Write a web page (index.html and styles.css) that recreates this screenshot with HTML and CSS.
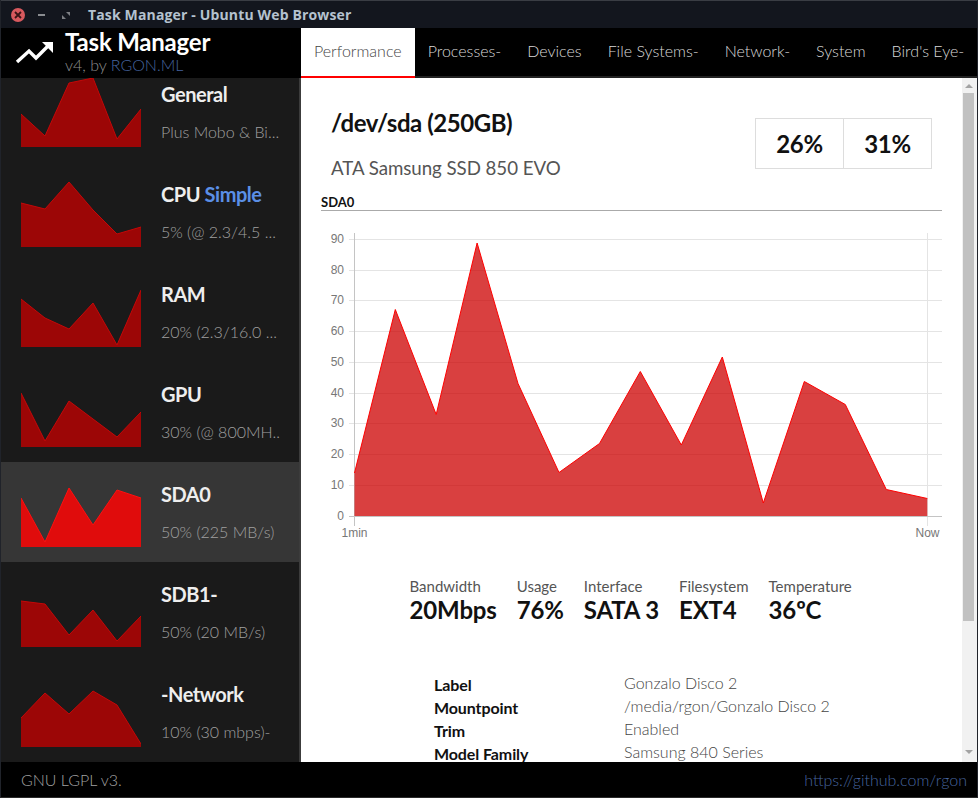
FILE: index.html
```html
<!DOCTYPE html>
<html lang="en">
<head>
  <meta charset="UTF-8">
  <title>Task Manager - Ubuntu Web Browser</title>
  <link rel="stylesheet" href="styles.css">
</head>
<body>
  <div class="titlebar">
    <span class="win-close">
      <svg width="8" height="8" viewBox="0 0 8 8"><path d="M1 1L7 7M7 1L1 7" stroke="#3a1416" stroke-width="1.8"/></svg>
    </span>
    <span class="win-min"></span>
    <svg class="win-max" width="8" height="8" viewBox="0 0 8 8"><path d="M4 1H8V5ZM0 4L4 8H0Z" fill="#7d7f84"/></svg>
    <span class="win-title">Task Manager - Ubuntu Web Browser</span>
  </div>

  <div class="header">
    <div class="brand">
      <svg class="brand-icon" width="40" height="28" viewBox="0 0 40 28"><path d="M3 22L15 11L22 18L34 6" fill="none" stroke="#fff" stroke-width="3.4"/><path d="M28 2H39V13Z" fill="#fff"/></svg>
      <div>
        <div class="brand-name">Task Manager</div>
        <div class="brand-sub">v4, by <span class="brand-link">RGON.ML</span></div>
      </div>
    </div>
    <div class="tabs">
      <div class="tab active">Performance</div>
      <div class="tab">Processes-</div>
      <div class="tab">Devices</div>
      <div class="tab">File Systems-</div>
      <div class="tab">Network-</div>
      <div class="tab">System</div>
      <div class="tab">Bird's Eye-</div>
    </div>
  </div>

  <div class="middle">
    <div class="sidebar">
      <div class="side-list">
        <div class="side-item">
          <svg class="spark" width="120" height="70" viewBox="0 0 120 70"><polygon points="0,37 24,59 48,6 72,1 96,62 120,32 120,70 0,70"/><polyline points="0,37 24,59 48,6 72,1 96,62 120,32"/></svg>
          <div class="side-text"><div class="side-name">General</div><div class="side-sub">Plus Mobo &amp; Bi...</div></div>
        </div>
        <div class="side-item">
          <svg class="spark" width="120" height="70" viewBox="0 0 120 70"><polygon points="0,26 24,32 48,5 72,33 96,57 120,50 120,70 0,70"/><polyline points="0,26 24,32 48,5 72,33 96,57 120,50"/></svg>
          <div class="side-text"><div class="side-name">CPU <span class="side-tag">Simple</span></div><div class="side-sub">5% (@ 2.3/4.5 ...</div></div>
        </div>
        <div class="side-item">
          <svg class="spark" width="120" height="70" viewBox="0 0 120 70"><polygon points="0,22 24,41 48,52 72,26 96,68 120,13 120,70 0,70"/><polyline points="0,22 24,41 48,52 72,26 96,68 120,13"/></svg>
          <div class="side-text"><div class="side-name">RAM</div><div class="side-sub">20% (2.3/16.0 ...</div></div>
        </div>
        <div class="side-item">
          <svg class="spark" width="120" height="70" viewBox="0 0 120 70"><polygon points="0,16 24,64 48,24 72,42 96,60 120,35 120,70 0,70"/><polyline points="0,16 24,64 48,24 72,42 96,60 120,35"/></svg>
          <div class="side-text"><div class="side-name">GPU</div><div class="side-sub">30% (@ 800MH..</div></div>
        </div>
        <div class="side-item active">
          <svg class="spark" width="120" height="70" viewBox="0 0 120 70"><polygon points="0,21 24,65 48,11 72,48 96,13 120,21 120,70 0,70"/><polyline points="0,21 24,65 48,11 72,48 96,13 120,21"/></svg>
          <div class="side-text"><div class="side-name">SDA0</div><div class="side-sub">50% (225 MB/s)</div></div>
        </div>
        <div class="side-item">
          <svg class="spark" width="120" height="70" viewBox="0 0 120 70"><polygon points="0,24 24,27 48,58 72,33 96,64 120,39 120,70 0,70"/><polyline points="0,24 24,27 48,58 72,33 96,64 120,39"/></svg>
          <div class="side-text"><div class="side-name">SDB1-</div><div class="side-sub">50% (20 MB/s)</div></div>
        </div>
        <div class="side-item">
          <svg class="spark" width="120" height="70" viewBox="0 0 120 70"><polygon points="0,41 24,16 48,37 72,14 96,28 120,67 120,70 0,70"/><polyline points="0,41 24,16 48,37 72,14 96,28 120,67"/></svg>
          <div class="side-text"><div class="side-name">-Network</div><div class="side-sub">10% (30 mbps)-</div></div>
        </div>
      </div>
    </div>

    <div class="content">
      <div class="disk-head">
        <div>
          <h1 class="disk-name">/dev/sda (250GB)</h1>
          <div class="disk-model">ATA Samsung SSD 850 EVO</div>
        </div>
        <div class="usage-boxes">
          <div class="usage-box">26%</div>
          <div class="usage-box">31%</div>
        </div>
      </div>

      <div class="chart-title">SDA0</div>
      <svg class="chart" width="621" height="340" viewBox="321 211 621 340">
        <g class="grid">
          <line x1="349" x2="942" y1="239.5" y2="239.5"/>
          <line x1="349" x2="942" y1="270.5" y2="270.5"/>
          <line x1="349" x2="942" y1="300.5" y2="300.5"/>
          <line x1="349" x2="942" y1="331.5" y2="331.5"/>
          <line x1="349" x2="942" y1="362.5" y2="362.5"/>
          <line x1="349" x2="942" y1="393.5" y2="393.5"/>
          <line x1="349" x2="942" y1="423.5" y2="423.5"/>
          <line x1="349" x2="942" y1="454.5" y2="454.5"/>
          <line x1="349" x2="942" y1="485.5" y2="485.5"/>
          <line x1="927.5" x2="927.5" y1="233" y2="526"/>
        </g>
        <line class="axis" x1="354.5" x2="354.5" y1="233" y2="526"/>
        <line class="axis" x1="349" x2="942" y1="516.5" y2="516.5"/>
        <polygon class="area" points="354.5,473 395.3,309.5 436.2,414.5 477.1,243 518,383.5 559,472.5 599.5,443.5 640.3,371.5 681.3,445 722.3,357 763.3,503 804.3,381.5 845.3,404.5 886.3,489.5 927.3,498.5 927.3,516 354.5,516"/>
        <polyline class="area-line" points="354.5,473 395.3,309.5 436.2,414.5 477.1,243 518,383.5 559,472.5 599.5,443.5 640.3,371.5 681.3,445 722.3,357 763.3,503 804.3,381.5 845.3,404.5 886.3,489.5 927.3,498.5"/>
        <g class="y-labels">
          <text x="344" y="243">90</text>
          <text x="344" y="274">80</text>
          <text x="344" y="304">70</text>
          <text x="344" y="335">60</text>
          <text x="344" y="366">50</text>
          <text x="344" y="397">40</text>
          <text x="344" y="427">30</text>
          <text x="344" y="458">20</text>
          <text x="344" y="489">10</text>
          <text x="344" y="520">0</text>
        </g>
        <text class="x-label" x="354.5" y="537">1min</text>
        <text class="x-label" x="927.5" y="537">Now</text>
      </svg>

      <div class="stats">
        <div><div class="stat-label">Bandwidth</div><div class="stat-value">20Mbps</div></div>
        <div><div class="stat-label">Usage</div><div class="stat-value">76%</div></div>
        <div><div class="stat-label">Interface</div><div class="stat-value">SATA 3</div></div>
        <div><div class="stat-label">Filesystem</div><div class="stat-value">EXT4</div></div>
        <div><div class="stat-label">Temperature</div><div class="stat-value">36ºC</div></div>
      </div>

      <div class="props">
        <div class="prop-key">Label</div><div class="prop-val">Gonzalo Disco 2</div>
        <div class="prop-key">Mountpoint</div><div class="prop-val">/media/rgon/Gonzalo Disco 2</div>
        <div class="prop-key">Trim</div><div class="prop-val">Enabled</div>
        <div class="prop-key">Model Family</div><div class="prop-val">Samsung 840 Series</div>
      </div>
    </div>

    <div class="scrollbar">
      <span class="arrow-up"></span>
      <div class="thumb"></div>
      <span class="arrow-down"></span>
    </div>
  </div>

  <div class="footer">
    <span>GNU LGPL v3.</span>
    <span class="footer-link">https://github.com/rgon</span>
  </div>
</body>
</html>
```

FILE: styles.css
```css
* {
  box-sizing: border-box;
}
html, body {
  margin: 0;
  height: 100%;
}
body {
  height: 798px;
  overflow: hidden;
  display: flex;
  flex-direction: column;
  background: #000;
  font-family: Lato, sans-serif;
  border-left: 1px solid #20232a;
  border-right: 1px solid #20232a;
  border-bottom: 1px solid #2a2a2a;
}

/* window title */
.titlebar {
  height: 28px;
  flex: none;
  margin: 0 -1px;
  padding-left: 11px;
  display: flex;
  align-items: center;
  background: #13161e;
  border-top: 1px solid #3a3d44;
}
.win-close {
  width: 14px;
  height: 14px;
  border-radius: 50%;
  background: #d8595e;
  display: flex;
  align-items: center;
  justify-content: center;
}
.win-min {
  width: 7px;
  height: 2px;
  margin-left: 13px;
  background: #8a8c90;
}
.win-max {
  margin-left: 17px;
}
.win-title {
  margin-left: 18px;
  font: bold 14px "Open Sans", sans-serif;
  letter-spacing: 0.15px;
  color: #b5c2cf;
}

/* header */
.header {
  height: 50px;
  flex: none;
  display: flex;
}
.brand {
  width: 300px;
  flex: none;
  display: flex;
  align-items: center;
  padding-left: 13px;
  color: #fff;
}
.brand-icon {
  margin-right: 11px;
  margin-top: 1px;
}
.brand-name {
  font-size: 24px;
  font-weight: 700;
  line-height: 28px;
  margin-top: -4px;
  letter-spacing: -0.2px;
}
.brand-sub {
  font-size: 16px;
  font-weight: 300;
  line-height: 18px;
  color: #8f8f8f;
}
.brand-link {
  color: #46649f;
}
.tabs {
  flex: 1;
  display: flex;
  border-bottom: 2px solid #222;
}
.tab {
  flex: none;
  height: 50px;
  padding: 0 13px;
  line-height: 46px;
  font-size: 16px;
  font-weight: 300;
  white-space: nowrap;
  color: #d8d8d8;
}
.tab.active {
  background: #fff;
  color: #444;
  border-bottom: 2px solid #f00;
}

.middle {
  flex: 1;
  min-height: 0;
  display: flex;
}

/* left list */
.sidebar {
  width: 300px;
  flex: none;
  overflow: hidden;
  background: #1a1a1a;
  border-right: 2px solid #3c3c3c;
}
.side-list {
  margin-top: -16px;
}
.side-item {
  height: 100px;
  display: flex;
  padding: 15px 0 0 20px;
}
.side-item.active {
  background: #363636;
}
.spark {
  flex: none;
}
.spark polygon {
  fill: #9c0606;
}
.spark polyline {
  fill: none;
  stroke: #c40808;
  stroke-width: 1;
}
.active .spark polygon {
  fill: #e00c0c;
}
.active .spark polyline {
  stroke: #ff1010;
}
.side-text {
  width: 118px;
  margin-left: 20px;
}
.side-name {
  margin-top: 3px;
  font-size: 20px;
  font-weight: 700;
  line-height: 28px;
  letter-spacing: -0.45px;
  color: #eee;
}
.side-tag {
  color: #5b8fe6;
}
.side-sub {
  margin-top: 14px;
  font-size: 16px;
  font-weight: 300;
  line-height: 20px;
  color: #a0a0a0;
  white-space: nowrap;
}

/* main panel */
.content {
  flex: 1;
  min-width: 0;
  overflow: hidden;
  background: #fff;
  padding: 0 20px;
}
.disk-head {
  display: flex;
  justify-content: space-between;
  padding: 30px 10px 0 10px;
  height: 117px;
}
.disk-name {
  margin: 0;
  font-size: 24px;
  font-weight: 700;
  line-height: 30px;
  letter-spacing: -0.45px;
  color: #111;
}
.disk-model {
  margin-top: 18px;
  font-size: 18.72px;
  font-weight: 400;
  line-height: 24px;
  letter-spacing: -0.05px;
  color: #555;
}
.usage-boxes {
  display: flex;
  margin: 10px 0 0 0;
  height: 51px;
}
.usage-box {
  width: 89px;
  border: 1px solid #ddd;
  margin-left: -1px;
  text-align: center;
  font-size: 24px;
  font-weight: 700;
  line-height: 49px;
  letter-spacing: -0.3px;
  color: #111;
}
.chart-title {
  height: 16px;
  line-height: 14px;
  font-size: 13px;
  font-weight: 700;
  color: #111;
  border-bottom: 1px solid #aaa;
}
.chart {
  display: block;
}
.grid line {
  stroke: #e4e4e4;
  stroke-width: 1;
}
.axis {
  stroke: #c4c4c4;
  stroke-width: 1;
}
.area {
  fill: rgba(204, 0, 0, 0.75);
}
.area-line {
  fill: none;
  stroke: #f00;
  stroke-width: 1;
}
.y-labels text {
  text-anchor: end;
}
.y-labels text, .x-label {
  font: 12px "Liberation Sans", sans-serif;
  fill: #777;
}
.x-label {
  text-anchor: middle;
}
.stats {
  display: flex;
  gap: 20px;
  margin: 25px 0 0 88.5px;
}
.stat-label {
  font-size: 15px;
  font-weight: 400;
  line-height: 20px;
  color: #555;
}
.stat-value {
  font-size: 24px;
  font-weight: 700;
  line-height: 28px;
  letter-spacing: -0.15px;
  color: #111;
}
.props {
  display: grid;
  grid-template-columns: 190px 1fr;
  grid-auto-rows: 23px;
  margin: 49px 0 0 113px;
  line-height: 23px;
  font-size: 15px;
}
.prop-key {
  font-size: 16px;
  font-weight: 700;
  letter-spacing: -0.1px;
  color: #111;
}
.prop-val {
  font-size: 16px;
  font-weight: 300;
  color: #444;
  margin-top: -2px;
}

/* scrollbar column */
.scrollbar {
  width: 15px;
  flex: none;
  background: #f1f1f1;
  display: flex;
  flex-direction: column;
  align-items: center;
  padding: 0 2px 0 0;
}
.arrow-up {
  margin-top: 6px;
  border-style: solid;
  border-width: 0 4px 4px 4px;
  border-color: transparent transparent #a3a3a3 transparent;
}
.arrow-down {
  margin-top: 129px;
  border-style: solid;
  border-width: 4px 4px 0 4px;
  border-color: #a3a3a3 transparent transparent transparent;
}
.thumb {
  width: 11px;
  height: 528px;
  margin-top: 5px;
  background: #c1c1c1;
}

/* footer */
.footer {
  height: 35px;
  flex: none;
  display: flex;
  justify-content: space-between;
  align-items: center;
  padding: 0 10px 0 20px;
  font-size: 16px;
  font-weight: 300;
  color: #a0a0a0;
}
.footer-link {
  color: #46649f;
}
```
